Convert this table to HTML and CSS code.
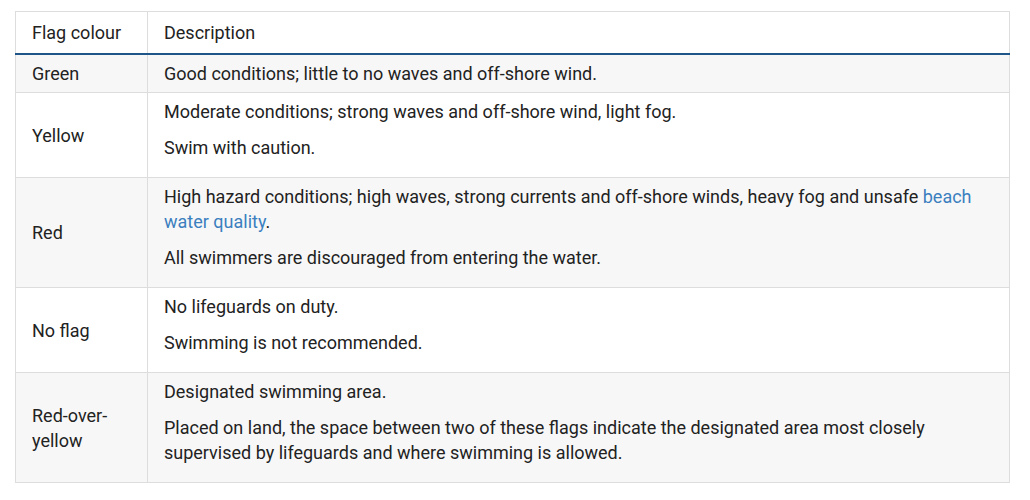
FILE: index.html
```html
<!DOCTYPE html>
<html lang="en">
<head>
<meta charset="utf-8">
<title>Flag colours</title>
<link rel="stylesheet" href="styles.css">
</head>
<body>
<table class="flags">
  <thead>
    <tr>
      <th class="col-flag">Flag colour</th>
      <th>Description</th>
    </tr>
  </thead>
  <tbody>
    <tr class="shaded">
      <td>Green</td>
      <td>Good conditions; little to no waves and off-shore wind.</td>
    </tr>
    <tr>
      <td>Yellow</td>
      <td>
        <p>Moderate conditions; strong waves and off-shore wind, light fog.</p>
        <p>Swim with caution.</p>
      </td>
    </tr>
    <tr class="shaded">
      <td>Red</td>
      <td>
        <p>High hazard conditions; high waves, strong currents and off-shore winds, heavy fog and unsafe <a href="#">beach water quality</a>.</p>
        <p>All swimmers are discouraged from entering the water.</p>
      </td>
    </tr>
    <tr>
      <td>No flag</td>
      <td>
        <p>No lifeguards on duty.</p>
        <p>Swimming is not recommended.</p>
      </td>
    </tr>
    <tr class="shaded">
      <td>Red-over-yellow</td>
      <td>
        <p>Designated swimming area.</p>
        <p>Placed on land, the space between two of these flags indicate the designated area most closely supervised by lifeguards and where swimming is allowed.</p>
      </td>
    </tr>
  </tbody>
</table>
</body>
</html>
```

FILE: styles.css
```css
html, body {
  margin: 0;
  padding: 0;
  background: #ffffff;
}

body {
  padding: 11px 0 0 15px;
  font-family: Roboto, "Liberation Sans", Arial, sans-serif;
  font-size: 18px;
  line-height: 25px;
  color: #222222;
}

.flags {
  width: 995px;
  border-collapse: collapse;
  border: 1px solid #dddddd;
}

.flags th,
.flags td {
  border: 1px solid #dddddd;
  text-align: left;
  vertical-align: middle;
}

.flags th {
  font-weight: 400;
  padding: 8px 16px;
  border-bottom: 2px solid #1d5687;
}

.flags td {
  padding: 6px 16px;
}

.flags .col-flag {
  width: 99px;
}

.flags tr.shaded td {
  background: #f7f7f7;
}

.flags p {
  margin: 0 0 11px;
}

.flags a {
  color: #3b7fbf;
  text-decoration: none;
}
```
